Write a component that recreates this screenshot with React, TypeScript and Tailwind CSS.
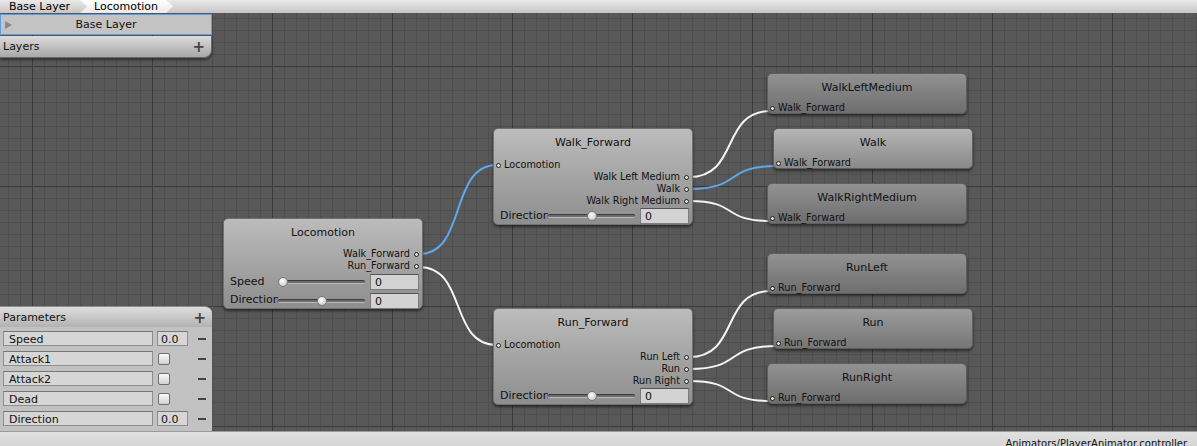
import React from 'react';

// Unity-style animator graph: blend tree view

const FONT = "font-['DejaVu_Sans',sans-serif]";

type Wire = { x1: number; y1: number; x2: number; y2: number; blue?: boolean };

const wires: Wire[] = [
  { x1: 419, y1: 241, x2: 497, y2: 152, blue: true },
  { x1: 419, y1: 254, x2: 497, y2: 332 },
  { x1: 689, y1: 164, x2: 771, y2: 98 },
  { x1: 689, y1: 176, x2: 777, y2: 153, blue: true },
  { x1: 689, y1: 188, x2: 771, y2: 208 },
  { x1: 689, y1: 344, x2: 771, y2: 278 },
  { x1: 689, y1: 356, x2: 777, y2: 333 },
  { x1: 689, y1: 368, x2: 771, y2: 388 },
];

const wirePath = (w: Wire) => {
  const d = (w.x2 - w.x1) * 0.62;
  return `M${w.x1} ${w.y1} C${w.x1 + d} ${w.y1} ${w.x2 - d} ${w.y2} ${w.x2} ${w.y2}`;
};

const Port = () => (
  <span className="block w-[5px] h-[5px] rounded-full border border-[#1c1c1c] bg-[#e6e6e6] shrink-0" />
);

const OutRow = ({ label }: { label: string }) => (
  <div className="h-[12px] pt-[2px] flex items-center justify-end gap-[4px] pr-[3px] text-[9.7px] leading-none text-[#111]">
    <span>{label}</span>
    <Port />
  </div>
);

const InRow = ({ label }: { label: string }) => (
  <div className="h-[12px] pt-[2px] flex items-center gap-[3px] pl-[2px] text-[9.7px] leading-none text-[#111]">
    <Port />
    <span>{label}</span>
  </div>
);

const Slider = ({ value, min, max }: { value: number; min: number; max: number }) => {
  const left = ((value - min) / (max - min)) * 77;
  return (
    <div className="relative w-[87px] h-[12px] flex items-center shrink-0">
      <div className="w-full h-[4px] rounded-full bg-[#6f6f6f] border-b border-[#b9b9b9] shadow-[inset_0_1px_1px_rgba(0,0,0,0.5)]" />
      <div
        className="absolute top-[1px] w-[10px] h-[10px] rounded-full border border-[#7a7a7a] bg-[radial-gradient(circle_at_40%_35%,#ffffff,#d8d8d8_60%,#b0b0b0)]"
        style={{ left }}
      />
    </div>
  );
};

const Field = ({ value }: { value: string }) => (
  <div className="ml-[5px] w-[49px] h-[16px] shrink-0 bg-[#d3d3d3] border border-[#7c7c7c] border-t-[#555] pl-[4px] text-[11px] leading-[15px] text-[#111]">
    {value}
  </div>
);

const SliderRow = ({ label, value, min, max, h }: { label: string; value: number; min: number; max: number; h: string }) => (
  <div className={`${h} pt-[3px] flex items-center pl-[6px]`}>
    <div className="w-[48px] overflow-hidden whitespace-nowrap text-[11px] text-[#111] shrink-0">{label}</div>
    <Slider value={value} min={min} max={max} />
    <Field value="0" />
  </div>
);

const Title = ({ text, pad = 'pt-[2px]' }: { text: string; pad?: string }) => (
  <div className={`h-[26px] ${pad} flex items-center justify-center text-[11px] text-[#111]`}>{text}</div>
);

const bigNode =
  'absolute w-[200px] rounded-[5px] border border-[#707070] bg-gradient-to-b from-[#bcbcbc] to-[#8e8e8e] shadow-[0_2px_3px_rgba(0,0,0,0.55)] flex flex-col';

const SmallNode = ({ title, input, pos, tone }: { title: string; input: string; pos: string; tone: string }) => (
  <div className={`absolute w-[200px] h-[41px] rounded-[5px] border border-[#5e5e5e] shadow-[0_2px_3px_rgba(0,0,0,0.5)] flex flex-col ${tone} ${pos}`}>
    <Title text={title} pad="pt-[4px]" />
    <div className="mt-[3px]">
      <InRow label={input} />
    </div>
  </div>
);

const BlendNode = ({ title, pos, outs }: { title: string; pos: string; outs: string[] }) => (
  <div className={`${bigNode} h-[97px] ${pos}`}>
    <Title text={title} />
    <div className="mt-[3px]">
      <InRow label="Locomotion" />
      {outs.map(o => (
        <OutRow key={o} label={o} />
      ))}
    </div>
    <SliderRow label="Direction" value={0} min={-1} max={1} h="h-[17px]" />
  </div>
);

const params = [
  { name: 'Speed', kind: 'float' },
  { name: 'Attack1', kind: 'bool' },
  { name: 'Attack2', kind: 'bool' },
  { name: 'Dead', kind: 'bool' },
  { name: 'Direction', kind: 'float' },
];

export default function App() {
  return (
    <div className={`w-[1197px] h-[446px] flex flex-col overflow-hidden bg-[#585858] ${FONT}`}>
      {/* breadcrumb bar */}
      <div className="h-[13px] shrink-0 flex bg-gradient-to-b from-[#eaeaea] to-[#c6c6c6] text-[11px] leading-[14px] text-black">
        <div className="w-[80px] pl-[9px] whitespace-nowrap">Base Layer</div>
        <div className="w-[93px] pl-[14px] bg-gradient-to-b from-[#ffffff] to-[#ebebeb] [clip-path:polygon(0_0,calc(100%-7px)_0,100%_50%,calc(100%-7px)_100%,0_100%,7px_50%)]">
          Locomotion
        </div>
      </div>

      {/* graph canvas */}
      <div className="relative flex-1 overflow-hidden bg-[#585858]">
        <svg className="absolute inset-0" width={1197} height={418}>
          <defs>
            <pattern id="minor" width="12" height="12" patternUnits="userSpaceOnUse" x="8" y="5">
              <rect width="12" height="1" fill="#4e4e4e" />
              <rect width="1" height="12" fill="#4e4e4e" />
            </pattern>
            <pattern id="major" width="120" height="120" patternUnits="userSpaceOnUse" x="32" y="53">
              <rect width="120" height="1" fill="#3b3b3b" />
              <rect width="1" height="120" fill="#3b3b3b" />
            </pattern>
          </defs>
          <rect width="1197" height="418" fill="url(#minor)" />
          <rect width="1197" height="418" fill="url(#major)" />
          {wires.map((w, i) => (
            <path key={i} d={wirePath(w)} fill="none" stroke={w.blue ? '#5ea9f0' : '#f4f4f4'} strokeWidth={2} />
          ))}
        </svg>

        {/* Locomotion (selected) */}
        <div className={`${bigNode} h-[91px] left-[223px] top-[205px] border-[#79b6f2] shadow-[0_0_4px_2px_rgba(60,140,230,0.75)]`}>
          <Title text="Locomotion" />
          <div className="mt-[2px]">
            <OutRow label="Walk_Forward" />
            <OutRow label="Run_Forward" />
          </div>
          <SliderRow label="Speed" value={0} min={0} max={1} h="h-[19px]" />
          <SliderRow label="Direction" value={0} min={-1} max={1} h="h-[18px]" />
        </div>

        <BlendNode title="Walk_Forward" pos="left-[493px] top-[115px]" outs={['Walk Left Medium', 'Walk', 'Walk Right Medium']} />
        <BlendNode title="Run_Forward" pos="left-[493px] top-[295px]" outs={['Run Left', 'Run', 'Run Right']} />

        <SmallNode title="WalkLeftMedium" input="Walk_Forward" pos="left-[767px] top-[60px]" tone="bg-gradient-to-b from-[#929292] to-[#6e6e6e]" />
        <SmallNode title="Walk" input="Walk_Forward" pos="left-[773px] top-[115px]" tone="bg-gradient-to-b from-[#b6b6b6] to-[#898989]" />
        <SmallNode title="WalkRightMedium" input="Walk_Forward" pos="left-[767px] top-[170px]" tone="bg-gradient-to-b from-[#929292] to-[#6e6e6e]" />
        <SmallNode title="RunLeft" input="Run_Forward" pos="left-[767px] top-[240px]" tone="bg-gradient-to-b from-[#929292] to-[#6e6e6e]" />
        <SmallNode title="Run" input="Run_Forward" pos="left-[773px] top-[295px]" tone="bg-gradient-to-b from-[#9c9c9c] to-[#767676]" />
        <SmallNode title="RunRight" input="Run_Forward" pos="left-[767px] top-[350px]" tone="bg-gradient-to-b from-[#929292] to-[#6e6e6e]" />

        {/* layers panel */}
        <div className="absolute left-0 top-[1px] w-[212px] flex flex-col gap-[1px]">
          <div className="relative h-[21px] pt-[2px] border border-[#5c9de4] bg-[#c3c3c3] flex items-center justify-center text-[11px] text-[#111]">
            <span className="absolute left-[4px] top-[6px] w-0 h-0 border-y-[4px] border-y-transparent border-l-[7px] border-l-[#8a8a8a]" />
            Base Layer
          </div>
          <div className="h-[22px] pt-[2px] flex items-center justify-between pl-[3px] pr-[6px] rounded-br-[8px] border-r border-b border-[#6a6a6a] bg-gradient-to-b from-[#dcdcdc] to-[#a8a8a8] shadow-[0_2px_3px_rgba(0,0,0,0.45)] text-[11px] text-[#111]">
            <span>Layers</span>
            <span className="text-[15px] font-bold text-[#444] leading-none">+</span>
          </div>
        </div>

        {/* parameters panel */}
        <div className="absolute left-0 bottom-0 w-[213px] flex flex-col border-r border-[#555]">
          <div className="h-[21px] pt-[2px] flex items-center justify-between pl-[3px] pr-[6px] rounded-tr-[7px] border-t border-[#8a8a8a] bg-gradient-to-b from-[#dedede] to-[#b2b2b2] text-[11px] text-[#111]">
            <span>Parameters</span>
            <span className="text-[15px] font-bold text-[#444] leading-none">+</span>
          </div>
          <div className="bg-[#c2c2c2] pt-[4px] flex flex-col">
            {params.map(p => (
              <div key={p.name} className="h-[20px] flex items-start pl-[3px]">
                <div className="w-[150px] h-[15px] bg-[#d6d6d6] border border-[#8e8e8e] border-t-[#777] pl-[5px] text-[11px] leading-[16px] text-[#111] overflow-hidden">
                  {p.name}
                </div>
                <div className="ml-[4px] w-[31px] flex">
                  {p.kind === 'float' ? (
                    <div className="w-[31px] h-[15px] bg-[#d6d6d6] border border-[#8e8e8e] border-t-[#777] pl-[3px] text-[11px] leading-[16px] text-[#111] overflow-hidden">
                      0.0
                    </div>
                  ) : (
                    <div className="ml-[1px] mt-[2px] w-[12px] h-[12px] rounded-[2px] border border-[#6e6e6e] bg-gradient-to-b from-[#fafafa] to-[#d2d2d2]" />
                  )}
                </div>
                <div className="ml-[10px] mt-[7px] w-[8px] h-[2px] bg-[#444]" />
              </div>
            ))}
          </div>
        </div>
      </div>

      {/* status bar */}
      <div className="h-[15px] shrink-0 border-t border-[#9a9a9a] bg-gradient-to-b from-[#e0e0e0] to-[#d6d6d6] flex justify-end pr-[10px] pt-[6px] text-[10px] leading-[12px] text-[#111] overflow-hidden">
        Animators/PlayerAnimator.controller
      </div>
    </div>
  );
}
